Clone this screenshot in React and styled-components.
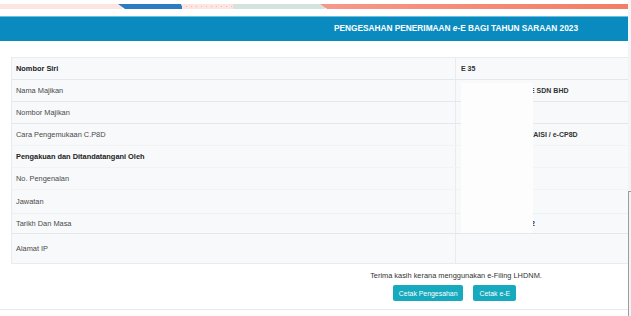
import styled, { createGlobalStyle } from 'styled-components'

const GlobalStyle = createGlobalStyle`
  html, body {
    margin: 0;
    padding: 0;
    background: #ffffff;
    font-family: "Liberation Sans", Arial, sans-serif;
  }
`

const rows = [
  { label: 'Nombor Siri', value: 'E 35', bold: true, h: 21, line: 'none' },
  { label: 'Nama Majikan', value: 'E SDN BHD', shift: 69, h: 22, line: '#e4e8ed' },
  { label: 'Nombor Majikan', value: '', h: 22, line: '#e4e8ed' },
  { label: 'Cara Pengemukaan C.P8D', value: 'ZAISI / e-CP8D', shift: 68, h: 22, line: '#e4e8ed' },
  { label: 'Pengakuan dan Ditandatangani Oleh', value: '', bold: true, h: 22, line: '#f1f3f5' },
  { label: 'No. Pengenalan', value: '', h: 22, line: '#f1f3f5' },
  { label: 'Jawatan', value: '', h: 24, line: '#f1f3f5' },
  { label: 'Tarikh Dan Masa', value: '2', shift: 70, h: 20, line: '#eef0f3' },
  { label: 'Alamat IP', value: '', h: 30, line: '#e4e8ed' },
]

const App = () => {
  return (
    <>
      <GlobalStyle />
      <Screen>
        <Clip>
          <Page>
            <Stripe width="628" height="5" viewBox="0 0 628 5">
              <rect x="0" y="0" width="122" height="5" fill="#fde6e2" />
              <polygon points="118,0 181,0 183,5 125,5" fill="#2c7dc0" />
              <rect x="182" y="0" width="52" height="5" fill="#fde6e2" />
              {Array.from({ length: 10 }).map((_, i) => (
                <rect key={i} x={186 + i * 5} y="2" width="1" height="1" fill="#f2b9b0" />
              ))}
              <rect x="233" y="0" width="92" height="5" fill="#d5e3df" />
              <defs>
                <linearGradient id="salmon" x1="0" x2="1" y1="0" y2="0">
                  <stop offset="0" stopColor="#f7988a" />
                  <stop offset="1" stopColor="#f27e64" />
                </linearGradient>
              </defs>
              <polygon points="320,0 628,0 628,5 327,5" fill="url(#salmon)" />
            </Stripe>
            <Header>
              <HeaderTitle>
                PENGESAHAN PENERIMAAN <i>e</i>-E BAGI TAHUN SARAAN 2023
              </HeaderTitle>
            </Header>
            <Table>
              {rows.map((r) => (
                <Row key={r.label} $h={r.h} $line={r.line}>
                  <Label $bold={r.bold}>{r.label}</Label>
                  <Value>
                    <span style={{ marginLeft: r.shift || 0 }}>{r.value}</span>
                  </Value>
                </Row>
              ))}
              <Redact />
            </Table>
            <Footer>
              <Thanks>Terima kasih kerana menggunakan e-Filing LHDNM.</Thanks>
              <Buttons>
                <Button>Cetak Pengesahan</Button>
                <Button>Cetak e-E</Button>
              </Buttons>
            </Footer>
          </Page>
        </Clip>
        <Rail>
          <RailEdge />
        </Rail>
      </Screen>
    </>
  )
}

export default App

const Screen = styled.div`
  display: flex;
  width: 631px;
  height: 316px;
  overflow: hidden;
`

const Clip = styled.div`
  width: 628px;
  height: 316px;
  overflow: hidden;
  flex-shrink: 0;
`

const Page = styled.div`
  width: 912px;
  display: flex;
  flex-direction: column;
`

const Stripe = styled.svg`
  display: block;
  margin-top: 4px;
  flex-shrink: 0;
`

const Header = styled.div`
  margin-top: 7px;
  height: 24px;
  background: #0a8bbf;
  border-top: 1px solid #6cc0e0;
  display: flex;
  align-items: center;
  justify-content: center;
`

const HeaderTitle = styled.div`
  color: #ffffff;
  font-weight: bold;
  font-size: 8.3px;
  margin-top: -2px;
`

const Table = styled.div`
  position: relative;
  margin: 16px 11px 0;
  border: 1px solid #e8ebef;
  background: #f8f9fb;
`

const Row = styled.div`
  display: grid;
  grid-template-columns: 443px 1fr;
  height: ${(p) => p.$h}px;
  border-top: ${(p) => (p.$line === 'none' ? 'none' : `1px solid ${p.$line}`)};
  box-sizing: border-box;
`

const Label = styled.div`
  display: flex;
  align-items: center;
  padding-left: 4px;
  font-size: 7.4px;
  color: ${(p) => (p.$bold ? '#222' : '#4a4a4a')};
  font-weight: ${(p) => (p.$bold ? 'bold' : 'normal')};
`

const Value = styled.div`
  display: flex;
  align-items: center;
  padding-left: 5px;
  border-left: 1px solid #e8ebef;
  font-size: 7px;
  color: #333;
  font-weight: bold;
`

const Redact = styled.div`
  position: absolute;
  left: 449px;
  top: 25px;
  width: 72px;
  height: 150px;
  background: #fdfdfe;
`

const Footer = styled.div`
  display: flex;
  flex-direction: column;
  align-items: center;
  padding: 7px 0 8px;
  border-bottom: 1px solid #e6e8eb;
  gap: 5px;
`

const Thanks = styled.div`
  font-size: 7.4px;
  color: #333;
`

const Buttons = styled.div`
  display: flex;
  gap: 10px;
  margin-left: -3px;
`

const Button = styled.button`
  background: #17a9bd;
  color: #ffffff;
  border: none;
  border-radius: 2px;
  height: 16px;
  padding: 0 6px;
  font-family: "Liberation Sans", Arial, sans-serif;
  font-size: 6.9px;
  cursor: pointer;
`

const Rail = styled.div`
  width: 3px;
  height: 316px;
  background: #f3f4f6;
`

const RailEdge = styled.div`
  margin-top: 191px;
  height: 125px;
  border-left: 1px solid #9c9c9c;
  border-top: 1px solid #9c9c9c;
`
